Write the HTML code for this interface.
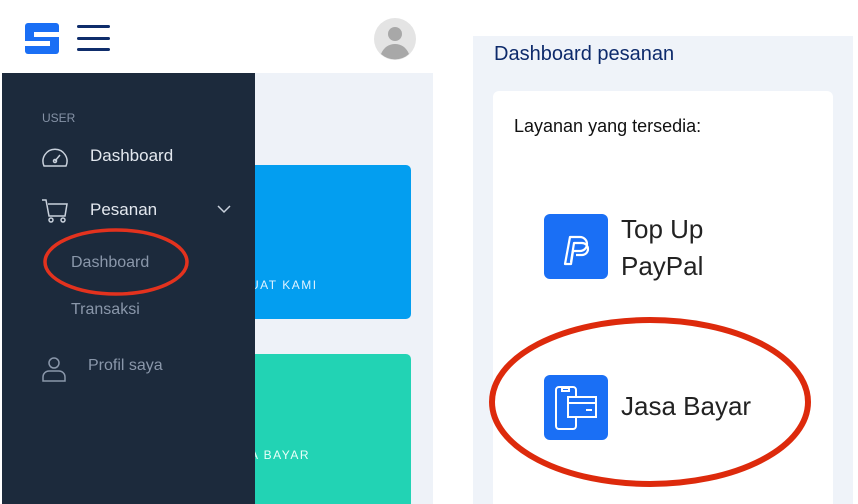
<!DOCTYPE html>
<html style="overflow:hidden"><head><style>
*{margin:0;padding:0;box-sizing:border-box}
html,body{width:858px;height:504px;overflow:hidden}
body{background:#fff;font-family:"Liberation Sans",sans-serif;position:relative}
.a{position:absolute}
</style></head><body>
<svg class="a" style="left:25px;top:23px" width="34" height="31" viewBox="0 0 34 31"><rect width="34" height="31" rx="3" fill="#1a6ff5"/><rect x="9" y="9" width="25" height="5" fill="#fff"/><rect x="0" y="18" width="25" height="5" fill="#fff"/></svg>
<div class="a" style="left:77px;top:25px;width:33px;height:3px;background:#0f2d6b;border-radius:2px"></div>
<div class="a" style="left:77px;top:37px;width:33px;height:3px;background:#0f2d6b;border-radius:2px"></div>
<div class="a" style="left:77px;top:48px;width:33px;height:3px;background:#0f2d6b;border-radius:2px"></div>
<svg class="a" style="left:374px;top:18px" width="42" height="42" viewBox="0 0 42 42"><circle cx="21" cy="21" r="21" fill="#e4e4e4"/><circle cx="21" cy="16" r="7" fill="#a8a8a8"/><path d="M7 36c3-7 8-10 14-10s11 3 14 10a21 21 0 0 1-28 0z" fill="#a8a8a8"/></svg>
<div class="a" style="left:2px;top:73px;width:431px;height:431px;background:#eef2f8"></div>
<div class="a" style="left:240px;top:165px;width:171px;height:154px;background:#039ef0;border-radius:5px"></div>
<div class="a" style="left:250px;top:278px;color:#dff2ff;font-size:12px;letter-spacing:1.5px">UAT KAMI</div>
<div class="a" style="left:240px;top:354px;width:171px;height:150px;background:#22d3b4;border-radius:5px 5px 0 0"></div>
<div class="a" style="left:250px;top:448px;color:#e8fff9;font-size:12px;letter-spacing:1.5px">A BAYAR</div>
<div class="a" style="left:2px;top:73px;width:253px;height:431px;background:#1c2a3c"></div>
<div class="a" style="left:42px;top:111px;color:#8592a6;font-size:12px">USER</div>
<svg class="a" style="left:41px;top:146px" width="28" height="22" viewBox="0 0 28 22" fill="none" stroke="#c9d1dc" stroke-width="1.5"><path d="M3 20A12 12 0 1 1 25 20z"/><path d="M14 15l5-6"/><circle cx="14" cy="15" r="1.5"/></svg>
<div class="a" style="left:90px;top:146px;color:#e3e8ef;font-size:17px">Dashboard</div>
<svg class="a" style="left:41px;top:198px" width="28" height="26" viewBox="0 0 28 26" fill="none" stroke="#c9d1dc" stroke-width="1.5"><path d="M1 2h4l3 16h16l2-12H7"/><circle cx="10" cy="22" r="2"/><circle cx="22" cy="22" r="2"/></svg>
<div class="a" style="left:90px;top:200px;color:#e3e8ef;font-size:17px">Pesanan</div>
<svg class="a" style="left:217px;top:205px" width="14" height="9" viewBox="0 0 14 9" fill="none" stroke="#c9d1dc" stroke-width="1.5"><path d="M1 1l6 6 6-6"/></svg>
<div class="a" style="left:71px;top:254px;color:#8a97aa;font-size:16px">Dashboard</div>
<div class="a" style="left:71px;top:301px;color:#8a97aa;font-size:16px">Transaksi</div>
<svg class="a" style="left:41px;top:355px" width="26" height="28" viewBox="0 0 26 28" fill="none" stroke="#8a97aa" stroke-width="1.5"><circle cx="13" cy="8" r="5"/><path d="M2 26v-4a6 6 0 0 1 6-6h10a6 6 0 0 1 6 6v4z"/></svg>
<div class="a" style="left:88px;top:357px;color:#8a97aa;font-size:16px">Profil saya</div>
<svg class="a" style="left:40px;top:225px" width="152" height="72" viewBox="0 0 152 72"><ellipse cx="76" cy="37" rx="71" ry="32" fill="none" stroke="#e3321e" stroke-width="3.5"/></svg>
<div class="a" style="left:473px;top:36px;width:380px;height:468px;background:#eff3f9"></div>
<div class="a" style="left:494px;top:43px;color:#0d2a6b;font-size:20px">Dashboard pesanan</div>
<div class="a" style="left:493px;top:91px;width:340px;height:413px;background:#fff;border-radius:6px 6px 0 0"></div>
<div class="a" style="left:514px;top:116px;color:#111;font-size:18px">Layanan yang tersedia:</div>
<div class="a" style="left:544px;top:214px;width:64px;height:65px;background:#1a6ff5;border-radius:6px"></div>
<svg class="a" style="left:544px;top:214px" width="64" height="65" viewBox="0 0 64 65" fill="none" stroke="#fff" stroke-width="2.2" stroke-linejoin="round"><path d="M21 50l5-27h10a7 7 0 0 1 0 14h-7l-2 13z"/><path d="M27 48l3-19h8a6 6 0 0 1 0 12h-6"/></svg>
<div class="a" style="left:621px;top:211px;color:#222;font-size:26px;line-height:37px">Top Up<br>PayPal</div>
<div class="a" style="left:544px;top:375px;width:64px;height:65px;background:#1a6ff5;border-radius:6px"></div>
<svg class="a" style="left:544px;top:375px" width="64" height="65" viewBox="0 0 64 65" fill="none" stroke="#fff" stroke-width="2"><rect x="12" y="12" width="20" height="42" rx="3"/><path d="M18 13h7v3h-7z"/><rect x="24" y="22" width="28" height="20" fill="#1a6ff5"/><path d="M24 28h28M42 35h6"/></svg>
<div class="a" style="left:621px;top:391px;color:#222;font-size:26px">Jasa Bayar</div>
<svg class="a" style="left:485px;top:312px" width="330" height="180" viewBox="0 0 330 180"><ellipse cx="165" cy="90" rx="158" ry="82" fill="none" stroke="#dd2a0c" stroke-width="6"/></svg>
</body></html>
